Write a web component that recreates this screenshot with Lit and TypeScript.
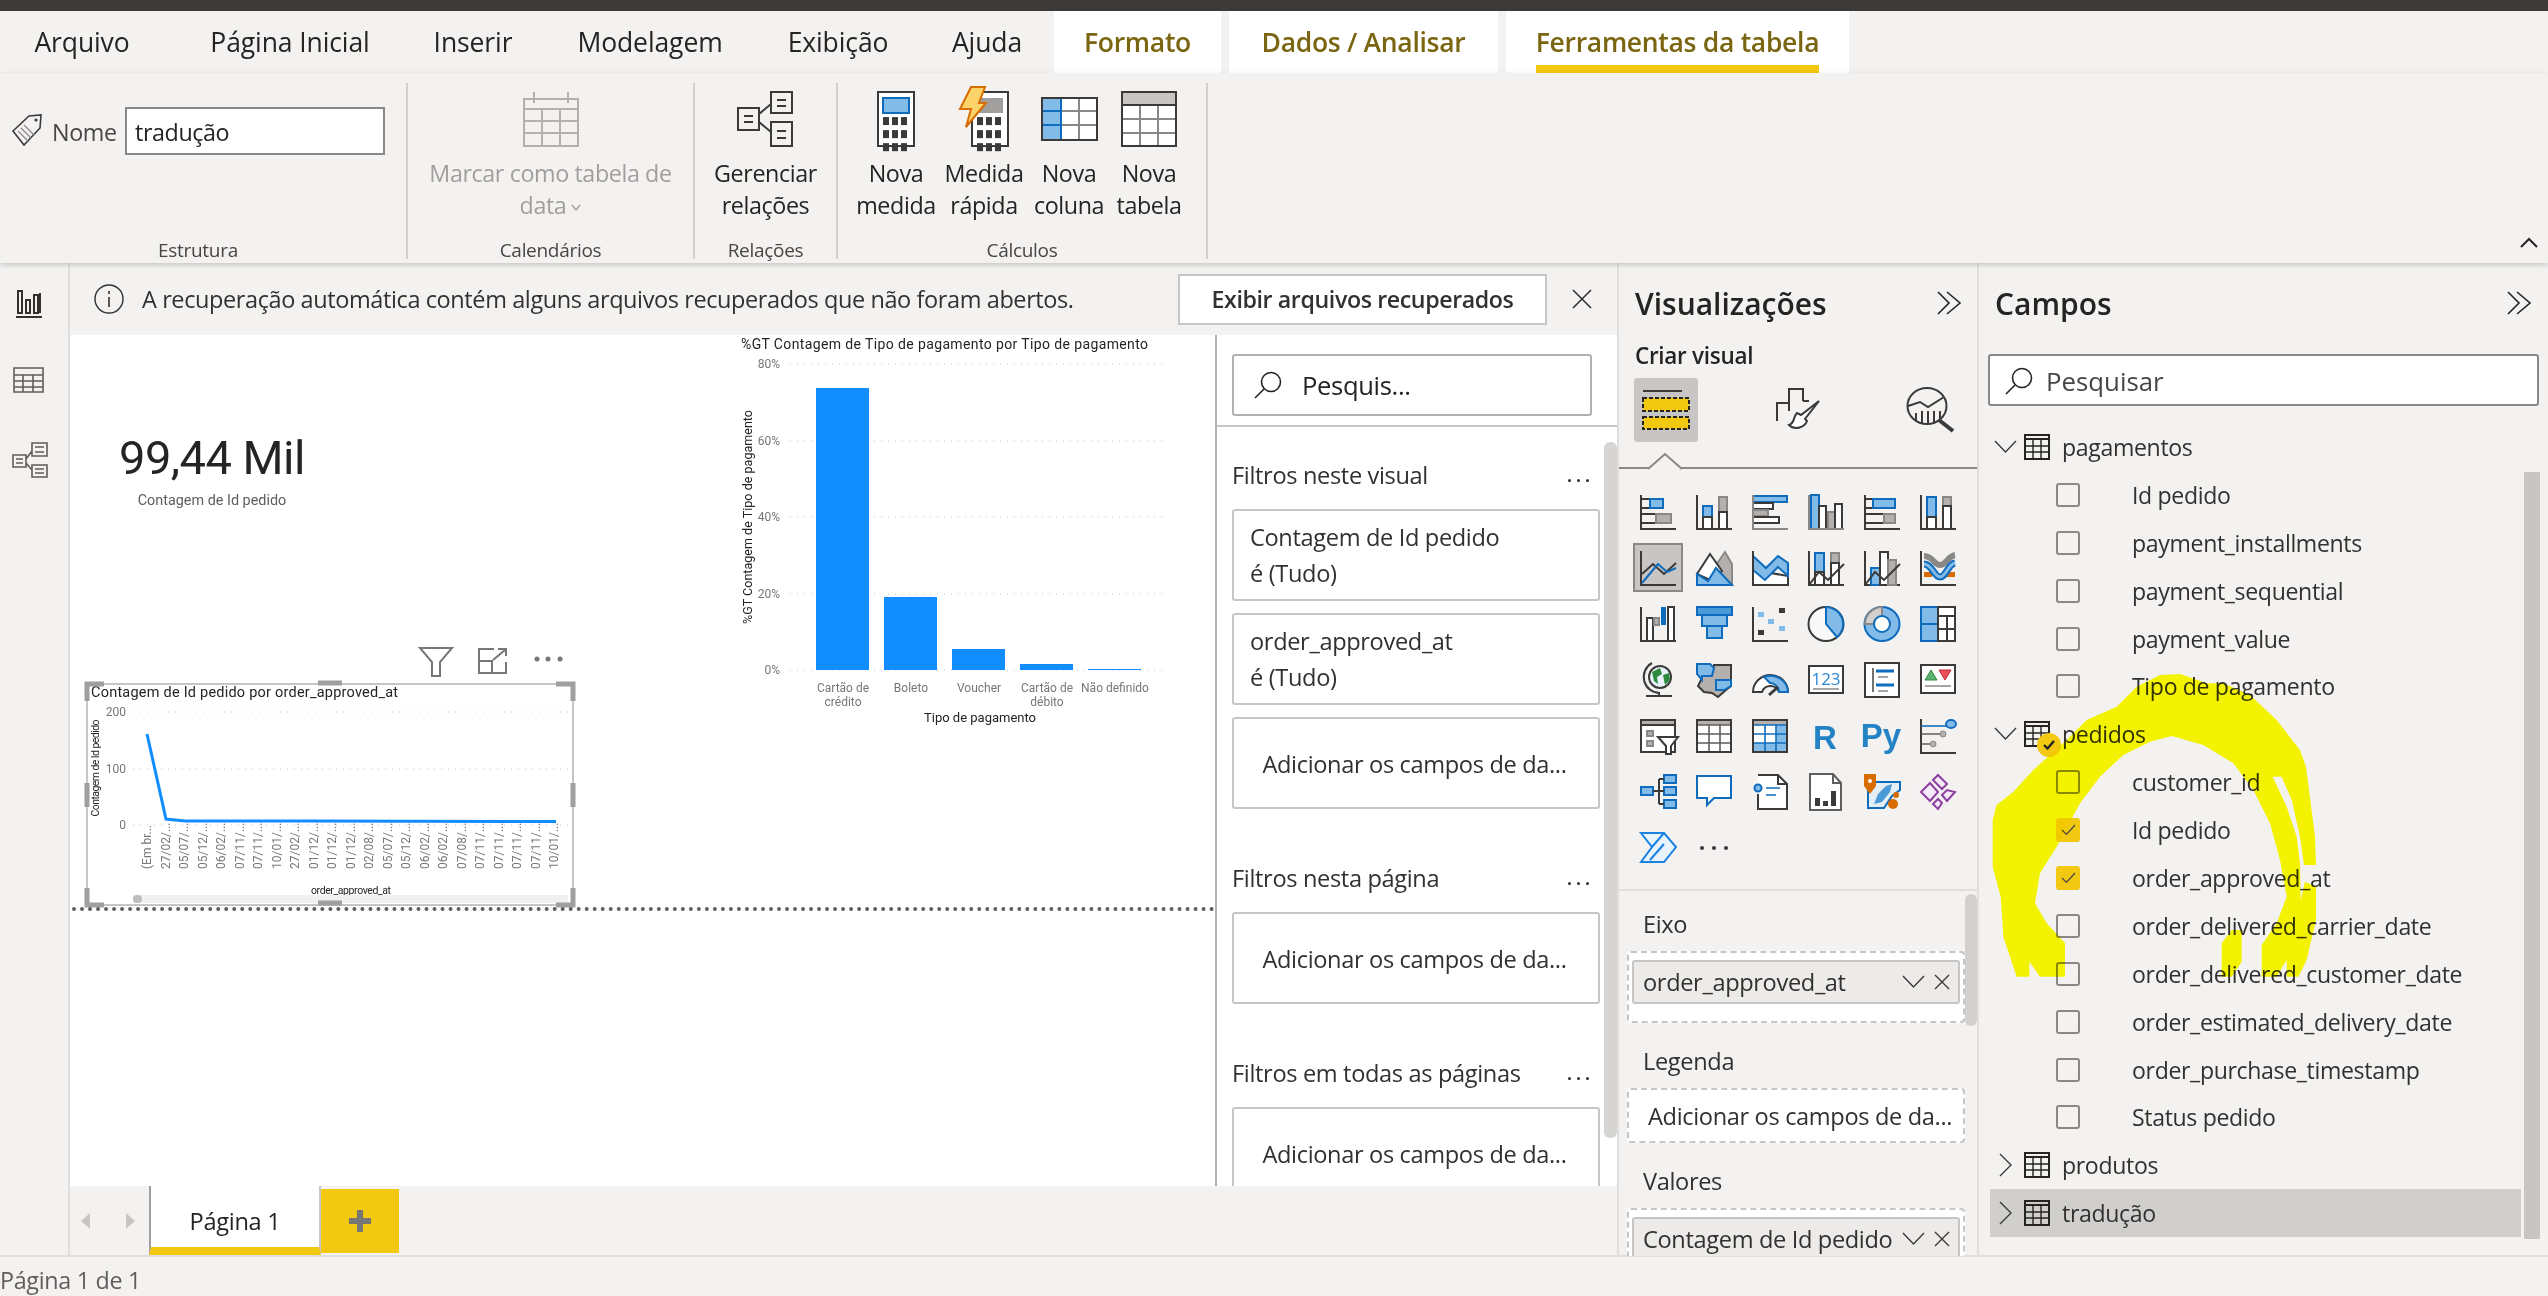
import { LitElement, html, css, svg } from "lit";
import { customElement } from "lit/decorators.js";

// shared look of the small svg icons
const iconStyles = css`
    svg { display: block; overflow: visible; }
    .d { fill: none; stroke: #3b3a39; stroke-width: 2; }
    .t { fill: none; stroke: #3b3a39; stroke-width: 1.4; }
    .w { fill: #ffffff; stroke: #3b3a39; stroke-width: 2; }
    .b { fill: #83bbe8; stroke: #0f6cbd; stroke-width: 2; }
    .g { fill: #b3b0ad; stroke: #8a8886; stroke-width: 2; }
    .f { fill: #3b3a39; stroke: none; }
`;

const axis = svg`<path class="d" d="M1 1V35H36"/>`;
const lineOver = svg`<path class="d" d="M1 35L11 22L20 30L36 14"/>`;

const vizIcons = [
    svg`${axis}<path class="d" d="M1 5H10M1 14H10M1 20H16M1 29H16"/><rect class="b" x="10" y="5" width="13" height="9"/><rect class="g" x="16" y="20" width="15" height="9"/>`,
    svg`${axis}<rect class="b" x="7" y="12" width="9" height="11"/><rect class="w" x="7" y="23" width="9" height="12"/><rect class="g" x="23" y="3" width="8" height="15"/><rect class="w" x="23" y="18" width="8" height="17"/>`,
    svg`<rect class="b" x="1" y="2" width="34" height="6"/><rect class="w" x="1" y="9" width="20" height="6"/><rect class="g" x="1" y="16" width="15" height="6"/><rect class="w" x="1" y="23" width="26" height="6"/><path class="g" d="M1 1V35H36" style="fill:none"/>`,
    svg`<rect class="b" x="3" y="1" width="8" height="34"/><rect class="w" x="11" y="12" width="7" height="23"/><rect class="g" x="20" y="18" width="7" height="17"/><rect class="w" x="27" y="10" width="7" height="25"/><path class="g" d="M1 1V35H36" style="fill:none"/>`,
    svg`${axis}<path class="d" d="M1 5H9M1 14H9M1 20H20M1 29H20"/><rect class="b" x="9" y="5" width="22" height="9"/><rect class="g" x="20" y="20" width="11" height="9"/>`,
    svg`${axis}<rect class="b" x="7" y="3" width="9" height="20"/><rect class="w" x="7" y="23" width="9" height="12"/><rect class="g" x="23" y="3" width="8" height="9"/><rect class="w" x="23" y="12" width="8" height="23"/>`,
    svg`<rect x="-6" y="-6" width="48" height="47" fill="#c8c6c4" stroke="#8a8886" stroke-width="2"/>${axis}<path class="d" d="M2 24L13 14L24 24L36 13"/><path d="M2 33L18 14L27 22L36 18" fill="none" stroke="#0f6cbd" stroke-width="2"/>`,
    svg`<path class="g" d="M18 18L29 2L36 14V35H26Z"/><path class="w" d="M1 24L14 4L26 21L14 30Z"/><path class="b" d="M1 35V24L12 31L20 18L36 35Z"/>`,
    svg`<path class="w" d="M1 20V35H36V26Z"/><path class="b" d="M1 6L14 18L26 6L36 13V26L26 17L13 30L1 20Z"/><path class="d" d="M1 1V35H36"/>`,
    svg`${axis}<rect class="b" x="7" y="3" width="9" height="19"/><rect class="w" x="7" y="22" width="9" height="13"/><rect class="g" x="23" y="3" width="8" height="10"/><rect class="w" x="23" y="13" width="8" height="22"/>${lineOver}`,
    svg`${axis}<rect class="b" x="7" y="18" width="9" height="17"/><rect class="w" x="16" y="2" width="8" height="33"/><rect class="g" x="24" y="10" width="8" height="25"/>${lineOver}`,
    svg`${axis}<path d="M4 6C13 6 14 15 20 15S28 6 35 5" fill="none" stroke="#8a8886" stroke-width="6"/><rect x="4" y="22" width="8" height="5" fill="#d86c00"/><rect x="27" y="22" width="8" height="5" fill="#d86c00"/><path d="M4 14C12 14 14 27 20 27S28 14 35 13" fill="none" stroke="#0f6cbd" stroke-width="7"/><path d="M4 14C12 14 14 27 20 27S28 14 35 13" fill="none" stroke="#83bbe8" stroke-width="3"/>`,
    svg`${axis}<rect class="w" x="7" y="12" width="6" height="23"/><rect class="g" x="14" y="12" width="5" height="7"/><rect x="21" y="1" width="5" height="18" fill="#0f6cbd"/><rect class="w" x="28" y="1" width="6" height="34"/>`,
    svg`<rect x="1" y="1" width="35" height="8" fill="#4a9ad8" stroke="#0f6cbd" stroke-width="2"/><rect class="b" x="6" y="9" width="25" height="11"/><rect class="b" x="11" y="20" width="15" height="12"/>`,
    svg`${axis}<rect x="6" y="6" width="6" height="5" fill="#83bbe8"/><rect x="16" y="13" width="6" height="5" fill="#83bbe8"/><rect x="27" y="20" width="6" height="5" fill="#83bbe8"/><rect class="f" x="27" y="2" width="6" height="5"/><rect class="f" x="6" y="24" width="6" height="5"/>`,
    svg`<ellipse class="w" cx="18" cy="18" rx="17.5" ry="17" style="fill:#f8f8f8"/><path class="b" d="M18 1A17.5 17 0 0 1 29 31L18 18Z"/>`,
    svg`<ellipse class="b" cx="18" cy="18" rx="17.5" ry="17"/><path class="g" d="M18 1A17.5 17 0 0 0 1 18H10A8 8 0 0 1 18 10Z" style="fill:#d2d0ce"/><ellipse cx="18" cy="18" rx="8" ry="8" fill="#fff" stroke="#0f6cbd" stroke-width="2"/>`,
    svg`<rect class="b" x="1" y="1" width="17" height="17"/><rect class="b" x="1" y="18" width="17" height="17"/><rect class="w" x="18" y="1" width="17" height="34"/><path class="d" d="M18 10H35M27 10V35M18 23H35"/>`,
    svg`<circle cx="20" cy="15" r="11" fill="#e8f2fb" stroke="#3b3a39" stroke-width="2"/><path d="M12 10L20 6L22 12L17 15L18 22L14 19Z" fill="#2e8b3e"/><path d="M23 13L29 11L30 18L25 23Z" fill="#2e8b3e"/><path class="d" d="M12 1A16 16 0 0 0 20 31M6 34H32M19 31V34"/>`,
    svg`<path class="g" d="M5 18L2 24L8 30L16 31L22 35L30 28L35 24V3L18 3L16 10L6 12Z" style="stroke:#3b3a39"/><path class="b" d="M1 2H14L18 6L16 14L6 14L6 18L1 12Z"/><path class="b" d="M20 18H35V24L28 28H20Z"/>`,
    svg`<path class="w" d="M1 30A17.5 17 0 0 1 36 30H27A9 9 0 0 0 10 30Z"/><path class="b" d="M12 15A17.5 17 0 0 1 36 30H27A9 9 0 0 0 18 21Z"/><path class="d" d="M17 33L26 25" style="stroke-width:3"/>`,
    svg`<rect class="w" x="1" y="4" width="34" height="27"/><text x="18" y="23" text-anchor="middle" font-family="Open Sans, sans-serif" font-size="17" fill="#2b88d8">123</text><path d="M5 27H31" stroke="#8a8886" stroke-width="1.5"/>`,
    svg`<rect class="w" x="1" y="1" width="34" height="34"/><path class="t" d="M9 6V30"/><path d="M12 9H30M12 23H30" stroke="#0f6cbd" stroke-width="3"/><path d="M14 15H24M14 29H24" stroke="#8a8886" stroke-width="1.5"/>`,
    svg`<rect class="w" x="1" y="3" width="34" height="28"/><path d="M5 18L11 8L17 18Z" fill="#5fb370" stroke="#2e8b3e"/><path d="M19 8H31L25 18Z" fill="#e8505b" stroke="#c4262e"/><path d="M5 24H31" stroke="#8a8886" stroke-width="1.5"/>`,
    svg`<rect class="w" x="1" y="2" width="34" height="32"/><rect x="1" y="2" width="34" height="5" fill="#b3b0ad" stroke="#3b3a39" stroke-width="2"/><rect class="g" x="7" y="13" width="6" height="5"/><rect class="g" x="7" y="23" width="6" height="5"/><path d="M18 19H38L31 28V36H26V28Z" fill="#fff" stroke="#3b3a39" stroke-width="2"/>`,
    svg`<rect class="w" x="1" y="2" width="34" height="32"/><rect x="1" y="2" width="34" height="5" fill="#b3b0ad"/><path d="M1 7H35M1 16H35M1 25H35M13 7V34M24 7V34" fill="none" stroke="#605e5c" stroke-width="1.6"/><rect x="1" y="2" width="34" height="32" fill="none" stroke="#3b3a39" stroke-width="2"/>`,
    svg`<rect class="w" x="1" y="2" width="34" height="32"/><rect x="1" y="2" width="34" height="5" fill="#b3b0ad"/><rect x="24" y="7" width="11" height="27" fill="#83bbe8"/><rect x="1" y="25" width="34" height="9" fill="#83bbe8"/><path d="M1 7H35M1 16H35M1 25H35M13 7V34M24 7V34" fill="none" stroke="#0f6cbd" stroke-width="1.6"/><rect x="1" y="2" width="34" height="32" fill="none" stroke="#3b3a39" stroke-width="2"/>`,
    svg`<text x="17" y="31" text-anchor="middle" font-family="Liberation Sans, sans-serif" font-weight="700" font-size="33" fill="#2483c5">R</text>`,
    svg`<text x="17" y="29" text-anchor="middle" font-family="Liberation Sans, sans-serif" font-weight="700" font-size="33" fill="#2483c5">Py</text>`,
    svg`${axis}<path d="M1 8H27" stroke="#0f6cbd" stroke-width="1.6"/><ellipse cx="31" cy="6" rx="5" ry="4" fill="#83bbe8" stroke="#0f6cbd" stroke-width="2"/><path d="M1 16H20M1 26H10" stroke="#605e5c" stroke-width="1.6"/><circle cx="23" cy="16" r="3" fill="#b3b0ad" stroke="#8a8886"/><circle cx="13" cy="26" r="3" fill="#b3b0ad" stroke="#8a8886"/>`,
    svg`<rect class="b" x="1" y="13" width="12" height="8"/><rect class="b" x="24" y="1" width="12" height="8"/><rect class="b" x="24" y="13" width="12" height="8"/><rect class="b" x="24" y="26" width="12" height="8"/><path class="d" d="M13 17H24M19 5V30M19 5H24M19 30H24"/>`,
    svg`<path d="M1 2H35V24H18L11 31V24H1Z" fill="#ffffff" stroke="#0f6cbd" stroke-width="2"/>`,
    svg`<path class="w" d="M6 1H26L35 10V35H6V20"/><path class="d" d="M26 1V10H35"/><circle cx="6" cy="14" r="3.5" fill="#83bbe8" stroke="#0f6cbd" stroke-width="2"/><path d="M14 14H28M14 21H24" stroke="#0f6cbd" stroke-width="1.6"/>`,
    svg`<path class="w" d="M2 0H25L33 9V36H2Z" style="stroke:#605e5c"/><path class="d" d="M25 0V9H33" style="stroke:#605e5c"/><rect class="f" x="7" y="24" width="5" height="8"/><rect class="f" x="15" y="27" width="5" height="5"/><rect class="f" x="23" y="17" width="5" height="15"/>`,
    svg`<path d="M4 8H36V16L28 22L20 34H4Z" fill="#e4eef7" stroke="#0f6cbd" stroke-width="2"/><path d="M14 20L22 12L28 10L26 18L18 28L10 30Z" fill="#4a9ad8"/><path d="M0 0H12V12L6 20L0 12Z" fill="#d86c00"/><circle cx="6" cy="7" r="2" fill="#fff"/><circle cx="32" cy="21" r="3" fill="#d86c00"/><circle cx="29" cy="30" r="5" fill="#d86c00"/>`,
    svg`<path d="M1 18L10 9L18 18L10 27ZM13 6L18 1L27 10L22 15ZM22 21L27 16L35 18L27 27ZM13 30L18 25L22 29L18 35Z" fill="#f4e9f6" stroke="#8e3ea0" stroke-width="2"/>`,
    svg`<path d="M1 3H24L36 17L24 32H1L12 17Z" fill="#e8f3fc" stroke="#1a82e2" stroke-width="2"/><path d="M12 17L24 3M10 30L24 14" stroke="#1a82e2" stroke-width="2"/>`,
    svg`<circle class="f" cx="6" cy="18" r="2"/><circle class="f" cx="18" cy="18" r="2"/><circle class="f" cx="30" cy="18" r="2"/>`,
];

const chevronDown = svg`<svg width="23" height="14" viewBox="0 0 23 14"><path d="M1 1L11.5 12L22 1" fill="none" stroke="#3b3a39" stroke-width="1.4"/></svg>`;
const crossIcon = svg`<svg width="16" height="16" viewBox="0 0 16 16"><path d="M1 1L15 15M15 1L1 15" fill="none" stroke="#3b3a39" stroke-width="1.4"/></svg>`;
const searchIcon = svg`<svg width="28" height="28" viewBox="0 0 28 28"><circle cx="17" cy="11" r="9.5" fill="none" stroke="#252423" stroke-width="1.6"/><path d="M10 18L1 27" fill="none" stroke="#252423" stroke-width="1.6"/></svg>`;
const doubleChevron = svg`<svg width="24" height="24" viewBox="0 0 24 24"><path d="M1 1L12 12L1 23M10 1L23 12L10 23" fill="none" stroke="#252423" stroke-width="1.6"/></svg>`;

@customElement("ribbon-bar")
export class RibbonBar extends LitElement {
    static styles = [iconStyles, css`
        :host { display: block; position: relative; z-index: 3; font-family: "Open Sans", "Noto Sans", sans-serif; color: #252423; }
        .tabs { display: flex; height: 62px; font-size: 26.5px; letter-spacing: -0.1px; }
        .tab { display: flex; align-items: center; justify-content: center; height: 62px; white-space: nowrap; }
        .ajuda { padding-left: 14px; box-sizing: border-box; }
        .context { background: #fff; color: #7a6510; margin-right: 8px; font-weight: 600; font-size: 26.5px; letter-spacing: -0.3px; position: relative; }
        .underline { position: absolute; left: 30px; right: 30px; bottom: 0; height: 8px; background: #f2c811; }
        .body { display: flex; height: 190px; box-sizing: border-box; padding: 10px 0 4px; background: #f3f2f1; box-shadow: 0 2px 5px rgba(0, 0, 0, 0.18); position: relative; font-size: 23.3px; letter-spacing: -0.4px; }
        .group { display: flex; flex-direction: column; border-right: 2px solid #d2d0ce; box-sizing: border-box; }
        .content { flex: 1; display: flex; min-height: 0; }
        .label { height: 18px; line-height: 18px; font-size: 19px; text-align: center; color: #484644; letter-spacing: -0.3px; white-space: nowrap; }
        .g1 .label { padding-right: 10px; }
        .name-row { align-items: flex-start; padding: 24px 0 0 12px; }
        .name-row svg { margin-top: 7px; }
        .name-label { width: 73px; margin: 8px 0 0 10px; line-height: 34px; color: #484644; }
        .name-input { width: 260px; height: 48px; box-sizing: border-box; border: 2px solid #8a8886; background: #fff; padding-left: 8px; line-height: 46px; }
        .button { display: flex; flex-direction: column; align-items: center; padding-top: 8px; text-align: center; white-space: nowrap; flex-shrink: 0; }
        .button .icon { height: 56px; display: flex; align-items: center; margin-bottom: 10px; }
        .button .line { line-height: 32px; }
        .disabled { color: #a19f9d; }
        .caret { display: inline-block; margin-left: 5px; vertical-align: 3px; }
        .collapse { position: absolute; right: 10px; top: 165px; }
        .g2 { width: 287px; }
        .g3 { width: 143px; }
        .g4 { width: 370px; }
        .g1 { width: 408px; }
        .calc { padding-left: 18px; }
    `];

    render() {
        const tabs: [string, number][] = [["Arquivo", 164], ["Página Inicial", 252], ["Inserir", 114], ["Modelagem", 240], ["Exibição", 136]];
        const context: [string, number][] = [["Formato", 167], ["Dados / Analisar", 269], ["Ferramentas da tabela", 343]];
        return html`
            <div class="tabs">
                ${tabs.map(([t, w]) => html`<div class="tab" style="width:${w}px">${t}</div>`)}
                <div class="tab ajuda" style="width:148px">Ajuda</div>
                ${context.map(([t, w], i) => html`<div class="tab context" style="width:${w}px">${t}${i === 2 ? html`<div class="underline"></div>` : ""}</div>`)}
            </div>
            <div class="body">
                <div class="group g1">
                    <div class="content name-row">
                        <svg width="30" height="32" viewBox="0 0 30 32"><path d="M1 17L17 2L29 1L28 14L12 31Z" fill="none" stroke="#3b3a39" stroke-width="1.6"/><path d="M6 17L17 28M9 14L19 24M12 11L22 21" stroke="#8a8886" stroke-width="1.2"/><circle cx="24" cy="6" r="1.6" fill="#3b3a39"/></svg>
                        <div class="name-label">Nome</div>
                        <div class="name-input">tradução</div>
                    </div>
                    <div class="label">Estrutura</div>
                </div>
                <div class="group g2">
                    <div class="content" style="justify-content:center">
                        <div class="button disabled">
                            <div class="icon">
                                <svg width="56" height="56" viewBox="0 0 56 56"><path d="M1 8H55V55H1ZM1 18H55M1 30H55M1 42H55M19 18V55M37 18V55M11 1V12M45 1V12" fill="none" stroke="#b3b0ad" stroke-width="2"/></svg>
                            </div>
                            <div class="line">Marcar como tabela de</div>
                            <div class="line">data<svg class="caret" width="10" height="7" viewBox="0 0 10 7"><path d="M1 1L5 6L9 1" fill="none" stroke="#a19f9d" stroke-width="1.4"/></svg></div>
                        </div>
                    </div>
                    <div class="label">Calendários</div>
                </div>
                <div class="group g3">
                    <div class="content" style="justify-content:center">
                        <div class="button">
                            <div class="icon">
                                <svg width="56" height="56" viewBox="0 0 56 56"><path d="M34 1H55V22H34ZM34 31H55V55H34ZM1 17H22V39H1ZM40 9H49M40 15H49M40 40H49M40 47H49M7 25H16M7 31H16M22 23L34 13M22 31L34 41" fill="none" stroke="#3b3a39" stroke-width="2"/></svg>
                            </div>
                            <div class="line">Gerenciar</div>
                            <div class="line">relações</div>
                        </div>
                    </div>
                    <div class="label">Relações</div>
                </div>
                <div class="group g4">
                    <div class="content calc">
                        <div class="button" style="width:80px">
                            <div class="icon">${this.calculator(false)}</div>
                            <div class="line">Nova</div><div class="line">medida</div>
                        </div>
                        <div class="button" style="width:96px">
                            <div class="icon">${this.calculator(true)}</div>
                            <div class="line">Medida</div><div class="line">rápida</div>
                        </div>
                        <div class="button" style="width:74px">
                            <div class="icon">
                                <svg width="57" height="44" viewBox="0 0 57 44"><rect x="1" y="1" width="55" height="42" fill="#fff"/><rect x="1" y="1" width="19" height="42" fill="#83bbe8"/><path d="M20 14H56M20 28H56M38 1V43" stroke="#8a8886" stroke-width="2"/><path d="M1 14H20M1 28H20M20 1V43" stroke="#0f6cbd" stroke-width="2"/><rect x="1" y="1" width="55" height="42" fill="none" stroke="#3b3a39" stroke-width="2"/></svg>
                            </div>
                            <div class="line">Nova</div><div class="line">coluna</div>
                        </div>
                        <div class="button" style="width:86px">
                            <div class="icon">
                                <svg width="56" height="56" viewBox="0 0 56 56"><rect x="1" y="1" width="54" height="54" fill="#fff"/><rect x="1" y="1" width="54" height="13" fill="#c8c6c4"/><path d="M1 28H55M1 42H55M19 14V55M37 14V55" stroke="#8a8886" stroke-width="2"/><rect x="1" y="1" width="54" height="54" fill="none" stroke="#3b3a39" stroke-width="2"/><path d="M1 14H55" stroke="#3b3a39" stroke-width="2"/></svg>
                            </div>
                            <div class="line">Nova</div><div class="line">tabela</div>
                        </div>
                    </div>
                    <div class="label">Cálculos</div>
                </div>
                <svg class="collapse" width="18" height="10" viewBox="0 0 18 10"><path d="M1 9L9 1L17 9" fill="none" stroke="#252423" stroke-width="2"/></svg>
            </div>
        `;
    }

    calculator(quick: boolean) {
        const keys = [16, 24, 32].flatMap((y) => [6, 15, 24].map((x) => svg`<rect class="f" x="${x}" y="${y * 1.63}" width="6" height="8"/>`));
        if (!quick) {
            return html`<svg width="38" height="56" viewBox="0 0 38 56"><rect class="w" x="1" y="1" width="36" height="54"/><rect x="6" y="7" width="26" height="15" fill="#83bbe8" stroke="#0f6cbd" stroke-width="2"/>${keys}</svg>`;
        }
        return html`<svg width="50" height="60" viewBox="0 0 50 60" style="margin-top:-4px"><rect class="w" x="13" y="5" width="36" height="54"/><rect x="18" y="11" width="26" height="15" fill="#a19f9d"/><g transform="translate(12 4)">${keys}</g><path d="M12 0H26L20 16H27L7 40L12 22H1Z" fill="#fcd26b" stroke="#d86c00" stroke-width="2"/></svg>`;
    }
}

@customElement("report-canvas")
export class ReportCanvas extends LitElement {
    static styles = css`
        :host { display: block; position: relative; width: 1145px; height: 851px; background: #fff; overflow: hidden; flex-shrink: 0; }
        .visual { position: absolute; overflow: visible; font-family: Roboto, "Liberation Sans", sans-serif; }
        .bars { left: 650px; top: 0; }
        .lines { left: 2px; top: 290px; }
        .kpi { position: absolute; left: 47px; top: 92px; width: 190px; text-align: center; font-family: Roboto, sans-serif; color: #252423; }
        .kpi-value { font-size: 47px; line-height: 62px; white-space: nowrap; letter-spacing: -0.5px; }
        .kpi-label { font-size: 14.4px; line-height: 18px; color: #605e5c; white-space: nowrap; margin-top: 3px; }
        .page-edge { position: absolute; left: 2px; right: 0; top: 572px; border-top: 4px dotted #605e5c; }
    `;

    render() {
        const bars = [[816, 388], [884, 597], [952, 649], [1020, 664], [1088, 669]];
        const ticks: [string, number][] = [["80%", 364], ["60%", 441], ["40%", 517], ["20%", 594], ["0%", 670]];
        const categories: [string[], number][] = [[["Cartão de", "crédito"], 843], [["Boleto"], 911], [["Voucher"], 979], [["Cartão de", "débito"], 1047], [["Não definido"], 1115]];
        const dates = ["(Em br...", "27/02/...", "05/07/...", "05/12/...", "06/02/...", "07/11/...", "07/11/...", "10/01/...", "27/02/...", "01/12/...", "01/12/...", "01/12/...", "02/08/...", "05/07/...", "05/12/...", "06/02/...", "06/02/...", "07/08/...", "07/11/...", "07/11/...", "07/11/...", "07/11/...", "10/01/..."];
        const lineTicks: [string, number][] = [["200", 712], ["100", 769], ["0", 825]];
        return html`
            <div class="kpi">
                <div class="kpi-value">99,44 Mil</div>
                <div class="kpi-label">Contagem de Id pedido</div>
            </div>

            <svg class="visual bars" width="530" height="400" viewBox="720 335 530 400">
                <text x="741" y="349" font-size="14" fill="#252423" textLength="407">%GT Contagem de Tipo de pagamento por Tipo de pagamento</text>
                ${ticks.map(([label, y]) => svg`
                    <path d="M790 ${y}H1166" stroke="#c8c6c4" stroke-width="1" stroke-dasharray="1 6"/>
                    <text x="780" y="${y + 4}" text-anchor="end" font-size="12" fill="#777">${label}</text>`)}
                ${bars.map(([x, top]) => svg`<rect x="${x}" y="${top}" width="53" height="${670 - top}" fill="#118dff"/>`)}
                ${categories.map(([lines, x]) => lines.map((line, i) => svg`<text x="${x}" y="${692 + i * 14}" text-anchor="middle" font-size="12" fill="#777">${line}</text>`))}
                <text x="980" y="722" text-anchor="middle" font-size="13" fill="#252423">Tipo de pagamento</text>
                <text transform="translate(752 517) rotate(-90)" text-anchor="middle" font-size="12.5" fill="#252423" textLength="214">%GT Contagem de Tipo de pagamento</text>
            </svg>

            <svg class="visual lines" width="510" height="290" viewBox="72 625 510 290">
                <path d="M420 648H452L440 662V676H432V662Z" fill="none" stroke="#797775" stroke-width="2"/>
                <path d="M494 649H479V673H506V662M479 661H492V673M493 660L505 650M498 649H506V656" fill="none" stroke="#797775" stroke-width="2"/>
                <circle cx="537" cy="659" r="2.5" fill="#797775"/><circle cx="548" cy="659" r="2.5" fill="#797775"/><circle cx="560" cy="659" r="2.5" fill="#797775"/>

                <rect x="87" y="684" width="486" height="221" fill="#fff" stroke="#c8c6c4" stroke-width="2"/>
                <text x="91" y="697" font-size="14.5" fill="#252423" textLength="307">Contagem de Id pedido por order_approved_at</text>
                ${lineTicks.map(([label, y]) => svg`
                    <path d="M133 ${y}H568" stroke="#c8c6c4" stroke-width="1" stroke-dasharray="1 6"/>
                    <text x="126" y="${y + 4}" text-anchor="end" font-size="12" fill="#777">${label}</text>`)}
                <text transform="translate(99 768) rotate(-90)" text-anchor="middle" font-size="10.5" fill="#252423" textLength="97">Contagem de Id pedido</text>
                <path d="M147 734L166 819L185 821L310 821L556 821.5" fill="none" stroke="#118dff" stroke-width="3"/>
                ${dates.map((d, i) => svg`<text transform="translate(${151 + i * 18.5} 869) rotate(-90)" font-size="12" fill="#777">${d}</text>`)}
                <text x="351" y="894" text-anchor="middle" font-size="10.5" fill="#252423" textLength="80">order_approved_at</text>
                <rect x="133" y="895" width="435" height="8" fill="#f0f0f0"/>
                <rect x="133" y="895" width="9" height="8" rx="4" fill="#bdbdbd"/>
                <path d="M87 701V684H104M556 684H573V701M87 888V905H104M556 905H573V888" fill="none" stroke="#a19f9d" stroke-width="5"/>
                <path d="M318 683H342M318 903H342M87 783V807M573 783V807" fill="none" stroke="#a19f9d" stroke-width="5"/>
            </svg>

            <div class="page-edge"></div>
        `;
    }
}

@customElement("filter-pane")
export class FilterPane extends LitElement {
    static styles = css`
        :host { display: block; position: relative; width: 402px; height: 851px; box-sizing: border-box; background: #fff; border-left: 2px solid #b3b0ad; overflow: hidden; font-family: "Open Sans", "Noto Sans", sans-serif; font-size: 23.6px; letter-spacing: -0.35px; color: #323130; flex-shrink: 0; }
        .search { display: flex; align-items: center; gap: 20px; margin: 19px 0 0 15px; width: 360px; height: 62px; box-sizing: border-box; border: 2px solid #b3b0ad; border-radius: 3px; padding-left: 20px; color: #252423; font-size: 25.6px; }
        .rule { height: 2px; background: #c8c6c4; margin-top: 9px; }
        .section-title { display: flex; align-items: center; justify-content: space-between; height: 30px; margin: 0 0 19px 15px; width: 360px; white-space: nowrap; }
        .dots { display: flex; gap: 6px; margin: 10px 3px 0 0; }
        .dots i { width: 3px; height: 3px; background: #323130; border-radius: 50%; }
        .card { width: 368px; height: 92px; box-sizing: border-box; margin: 0 0 12px 15px; border: 2px solid #c8c6c4; border-radius: 3px; padding: 8px 0 0 16px; line-height: 36px; white-space: nowrap; }
        .add { display: flex; align-items: center; justify-content: center; padding: 2px 3px 0 0; }
        .first { margin-top: 33px; }
        .next { margin-top: 54px; }
        .scroll { position: absolute; left: 387px; top: 107px; width: 13px; height: 696px; border-radius: 6px; background: #d6d5d3; }
    `;

    render() {
        const dots = html`<span class="dots"><i></i><i></i><i></i></span>`;
        return html`
            <div class="search">${searchIcon}<span>Pesquis...</span></div>
            <div class="rule"></div>
            <div class="section-title first"><span>Filtros neste visual</span>${dots}</div>
            <div class="card">Contagem de Id pedido<br />é (Tudo)</div>
            <div class="card">order_approved_at<br />é (Tudo)</div>
            <div class="card add">Adicionar os campos de da...</div>
            <div class="section-title next"><span>Filtros nesta página</span>${dots}</div>
            <div class="card add">Adicionar os campos de da...</div>
            <div class="section-title next"><span>Filtros em todas as páginas</span>${dots}</div>
            <div class="card add">Adicionar os campos de da...</div>
            <div class="scroll"></div>
        `;
    }
}

@customElement("viz-pane")
export class VizPane extends LitElement {
    static styles = [iconStyles, css`
        :host { display: block; position: relative; width: 362px; height: 993px; box-sizing: border-box; border-left: 2px solid #e1dfdd; border-right: 2px solid #e1dfdd; overflow: hidden; font-family: "Open Sans", "Noto Sans", sans-serif; color: #252423; flex-shrink: 0; }
        .title { display: flex; align-items: center; justify-content: space-between; height: 40px; margin-top: 20px; padding: 0 16px; font-size: 30px; font-weight: 600; }
        .subtitle { height: 30px; line-height: 30px; margin: 18px 0 7px 16px; font-size: 22.5px; font-weight: 600; letter-spacing: -0.3px; }
        .modes { display: flex; gap: 68px; padding-left: 15px; }
        .mode { width: 64px; height: 64px; display: flex; align-items: center; justify-content: center; border-radius: 3px; }
        .mode.on { background: #c8c6c4; }
        .rule { position: relative; height: 2px; background: #8a8886; margin-top: 25px; }
        .notch { position: absolute; left: 29px; top: -14px; }
        .grid { display: grid; grid-template-columns: repeat(6, 36px); grid-auto-rows: 36px; gap: 20px; padding: 25px 0 0 21px; height: 420px; box-sizing: border-box; }
        .wells { border-top: 2px solid #e1dfdd; padding-top: 18px; font-size: 23.6px; letter-spacing: -0.35px; color: #323130; }
        .well-title { height: 30px; line-height: 30px; margin: 0 0 12px 24px; }
        .well { width: 338px; box-sizing: border-box; margin: 0 0 23px 8px; background: #fff; border: 2px dashed #c8c6c4; border-radius: 4px; padding: 7px 3px 0; height: 72px; }
        .well.empty { height: 55px; padding: 0 0 0 19px; line-height: 52px; white-space: nowrap; }
        .pill { display: flex; align-items: center; height: 44px; box-sizing: border-box; background: #edebe9; border: 2px solid #c8c6c4; border-radius: 3px; padding: 0 8px 0 9px; white-space: nowrap; }
        .pill .name { flex: 1; }
        .pill .x { margin-left: 9px; }
        .scroll { position: absolute; right: 0; top: 631px; width: 12px; height: 132px; border-radius: 6px; background: #d2d0ce; }
    `];

    render() {
        return html`
            <div class="title"><span>Visualizações</span>${doubleChevron}</div>
            <div class="subtitle">Criar visual</div>
            <div class="modes">
                <div class="mode on">
                    <svg width="48" height="40" viewBox="0 0 48 40"><path d="M1 1H40" stroke="#3b3a39" stroke-width="2"/><rect x="1" y="8" width="46" height="13" fill="#f2c811" stroke="#252423" stroke-width="2" stroke-dasharray="4 2"/><rect x="1" y="27" width="46" height="12" fill="#f2c811" stroke="#252423" stroke-width="2" stroke-dasharray="4 2"/></svg>
                </div>
                <div class="mode">
                    <svg width="46" height="46" viewBox="0 0 46 46"><path d="M2 34V16H14M14 24V2H28V14M28 14H34M14 16V24" fill="none" stroke="#3b3a39" stroke-width="2"/><path d="M44 14L26 28L22 26C18 30 20 36 14 38C20 44 30 40 32 34L30 32Z" fill="#fff" stroke="#3b3a39" stroke-width="2"/></svg>
                </div>
                <div class="mode">
                    <svg width="48" height="46" viewBox="0 0 48 46"><ellipse cx="21" cy="19" rx="19.5" ry="18" fill="none" stroke="#3b3a39" stroke-width="2"/><path d="M2 19L14 15L22 20L38 10M10 26V33M16 24V36M22 24V36M28 24V36M34 24V33" fill="none" stroke="#3b3a39" stroke-width="2"/><path d="M33 33L47 44" stroke="#3b3a39" stroke-width="4"/></svg>
                </div>
            </div>
            <div class="rule">
                <svg class="notch" width="34" height="16" viewBox="0 0 34 16"><path d="M0 16L17 1L34 16" fill="#f3f2f1" stroke="#8a8886" stroke-width="2"/></svg>
            </div>
            <div class="grid">
                ${vizIcons.map((icon) => html`<svg width="36" height="36" viewBox="0 0 36 36">${icon}</svg>`)}
            </div>
            <div class="wells">
                <div class="well-title">Eixo</div>
                <div class="well">
                    <div class="pill"><span class="name">order_approved_at</span>${chevronDown}<span class="x">${crossIcon}</span></div>
                </div>
                <div class="well-title">Legenda</div>
                <div class="well empty">Adicionar os campos de da...</div>
                <div class="well-title">Valores</div>
                <div class="well">
                    <div class="pill"><span class="name">Contagem de Id pedido</span>${chevronDown}<span class="x">${crossIcon}</span></div>
                </div>
            </div>
            <div class="scroll"></div>
        `;
    }
}

type FieldGroup = { name: string; open: boolean; active?: boolean; badge?: boolean; fields: [string, boolean][] };

const fieldGroups: FieldGroup[] = [
    {
        name: "pagamentos", open: true,
        fields: [["Id pedido", false], ["payment_installments", false], ["payment_sequential", false], ["payment_value", false], ["Tipo de pagamento", false]],
    },
    {
        name: "pedidos", open: true, badge: true,
        fields: [["customer_id", false], ["Id pedido", true], ["order_approved_at", true], ["order_delivered_carrier_date", false], ["order_delivered_customer_date", false], ["order_estimated_delivery_date", false], ["order_purchase_timestamp", false], ["Status pedido", false]],
    },
    { name: "produtos", open: false, fields: [] },
    { name: "tradução", open: false, active: true, fields: [] },
];

@customElement("fields-pane")
export class FieldsPane extends LitElement {
    static styles = css`
        :host { display: block; position: relative; flex: 1; height: 993px; font-family: "Open Sans", "Noto Sans", sans-serif; color: #323130; }
        svg { display: block; flex-shrink: 0; }
        .title { display: flex; align-items: center; justify-content: space-between; height: 40px; margin-top: 20px; padding: 0 17px 0 16px; font-size: 30px; font-weight: 600; color: #252423; }
        .search { display: flex; align-items: center; gap: 13px; width: 551px; height: 52px; box-sizing: border-box; margin: 31px 0 0 9px; padding: 2px 0 0 15px; background: #fff; border: 2px solid #8a8886; border-radius: 3px; font-size: 25.8px; color: #484644; }
        .tree { margin: 17px 0 0 11px; width: 531px; font-size: 23.1px; letter-spacing: -0.35px; }
        .row { display: flex; align-items: center; height: 47.9px; white-space: nowrap; }
        .head { padding-left: 4px; }
        .head.active { background: #d0cfcd; }
        .arrow { width: 23px; display: flex; justify-content: center; }
        .table { position: relative; margin: 0 12px 0 7px; }
        .badge { position: absolute; left: 13px; top: 12px; width: 24px; height: 24px; border-radius: 50%; background: #f2c811; display: flex; align-items: center; justify-content: center; }
        .field { padding-left: 66px; }
        .check { width: 24px; height: 24px; box-sizing: border-box; border: 2px solid #8a8886; border-radius: 3px; margin-right: 52px; flex-shrink: 0; }
        .check.on { background: #f2c811; border: none; display: flex; align-items: center; justify-content: center; }
        .scroll { position: absolute; left: 545px; top: 209px; width: 16px; height: 767px; background: #c8c6c4; }
    `;

    render() {
        return html`
            <div class="title"><span>Campos</span>${doubleChevron}</div>
            <div class="search">${searchIcon}<span>Pesquisar</span></div>
            <div class="tree">${fieldGroups.map((group) => this.renderGroup(group))}</div>
            <div class="scroll"></div>
        `;
    }

    renderGroup(group: FieldGroup) {
        return html`
            <div class="row head ${group.active ? "active" : ""}">
                <div class="arrow">
                    ${group.open
                        ? html`<svg width="23" height="14" viewBox="0 0 23 14"><path d="M1 1L11.5 12L22 1" fill="none" stroke="#3b3a39" stroke-width="1.4"/></svg>`
                        : html`<svg width="13" height="24" viewBox="0 0 13 24"><path d="M1 1L12 12L1 23" fill="none" stroke="#3b3a39" stroke-width="1.4"/></svg>`}
                </div>
                <div class="table">
                    <svg width="26" height="26" viewBox="0 0 26 26"><path d="M1 1H25V25H1ZM1 5H25" fill="none" stroke="#252423" stroke-width="2"/><path d="M1 12H25M1 18H25M9 5V25M17 5V25" fill="none" stroke="#252423" stroke-width="1.4"/></svg>
                    ${group.badge
                        ? html`<div class="badge"><svg width="12" height="10" viewBox="0 0 12 10"><path d="M1 5L4.5 8.5L11 1" fill="none" stroke="#252423" stroke-width="2.4"/></svg></div>`
                        : ""}
                </div>
                <span>${group.name}</span>
            </div>
            ${group.fields.map(([name, checked]) => html`
                <div class="row field">
                    ${checked
                        ? html`<div class="check on"><svg width="15" height="12" viewBox="0 0 15 12"><path d="M1 6L5.5 10.5L14 1" fill="none" stroke="#484644" stroke-width="1.2"/></svg></div>`
                        : html`<div class="check"></div>`}
                    <span>${name}</span>
                </div>`)}
        `;
    }
}

@customElement("app-root")
export class AppRoot extends LitElement {
    static styles = [iconStyles, css`
        :host { display: flex; flex-direction: column; position: relative; width: 2548px; height: 1296px; overflow: hidden; background: #f3f2f1; font-family: "Open Sans", "Noto Sans", sans-serif; color: #252423; }
        .topbar { height: 11px; background: #3b3a39; flex-shrink: 0; }
        .main { display: flex; height: 992px; flex-shrink: 0; }
        .rail { width: 70px; box-sizing: border-box; border-right: 2px solid #e1dfdd; display: flex; flex-direction: column; gap: 48px; padding: 27px 0 0 15px; flex-shrink: 0; }
        .rail .wide { margin-left: -2px; }
        .rail .wider { margin-left: -3px; }
        .center { display: flex; flex-direction: column; width: 1547px; flex-shrink: 0; }
        .notice { display: flex; align-items: center; height: 72px; padding-left: 24px; font-size: 23.5px; letter-spacing: -0.4px; color: #323130; white-space: nowrap; flex-shrink: 0; }
        .notice-text { margin-left: 18px; }
        .notice-button { width: 369px; height: 51px; box-sizing: border-box; margin-left: auto; background: #fff; border: 2px solid #c8c6c4; display: flex; align-items: center; justify-content: center; font-weight: 600; font-size: 23.2px; letter-spacing: -0.4px; }
        .notice-close { width: 69px; display: flex; justify-content: center; padding-right: 1px; }
        .report { display: flex; height: 851px; flex-shrink: 0; }
        .pages { display: flex; height: 69px; padding-left: 11px; flex-shrink: 0; }
        .pager { display: flex; align-items: center; gap: 36px; width: 68px; padding-top: 0; }
        .page { width: 172px; box-sizing: border-box; background: #fff; border-left: 2px solid #a19f9d; border-right: 2px solid #c8c6c4; border-bottom: 8px solid #f2c811; display: flex; align-items: center; justify-content: center; font-size: 23.6px; letter-spacing: -0.3px; font-weight: 500; padding-top: 8px; }
        .add-page { width: 78px; height: 64px; margin-top: 3px; background: #f2c811; display: flex; align-items: center; justify-content: center; }
        .status { flex: 1; border-top: 2px solid #e1dfdd; font-size: 23.3px; letter-spacing: -0.3px; line-height: 46px; color: #605e5c; }
        .scribble { position: absolute; left: 1990px; top: 660px; mix-blend-mode: multiply; pointer-events: none; z-index: 5; }
    `];

    render() {
        return html`
            <div class="topbar"></div>
            <ribbon-bar></ribbon-bar>
            <div class="main">
                <div class="rail">
                    <svg width="28" height="28" viewBox="0 0 28 28"><path d="M1 27H27M3 23V1H7V23ZM11 23V10H15V23ZM19 23V5H23V23ZM25 23V3" fill="none" stroke="#323130" stroke-width="2"/></svg>
                    <svg class="wide" width="31" height="28" viewBox="0 0 31 28"><path d="M1 2H30V26H1ZM1 9H30M1 15H30M1 21H30M10 9V26M20 9V26" fill="none" stroke="#605e5c" stroke-width="1.6"/></svg>
                    <svg class="wider" width="36" height="36" viewBox="0 0 36 36"><path d="M1 13H14V25H1ZM20 1H35V14H20ZM20 23H35V35H20ZM14 17L20 9M14 21L20 28M23 5H32M23 10H32M23 27H32M23 31H32M4 17H11M4 21H11" fill="none" stroke="#605e5c" stroke-width="1.6"/></svg>
                </div>
                <div class="center">
                    <div class="notice">
                        <svg width="30" height="30" viewBox="0 0 30 30"><circle cx="15" cy="15" r="14" fill="none" stroke="#323130" stroke-width="1.4"/><path d="M15 13V23M15 7V10" stroke="#323130" stroke-width="1.6"/></svg>
                        <span class="notice-text">A recuperação automática contém alguns arquivos recuperados que não foram abertos.</span>
                        <div class="notice-button">Exibir arquivos recuperados</div>
                        <div class="notice-close"><svg width="20" height="20" viewBox="0 0 20 20"><path d="M1 1L19 19M19 1L1 19" fill="none" stroke="#323130" stroke-width="1.6"/></svg></div>
                    </div>
                    <div class="report">
                        <report-canvas></report-canvas>
                        <filter-pane></filter-pane>
                    </div>
                    <div class="pages">
                        <div class="pager">
                            <svg width="9" height="16" viewBox="0 0 9 16"><path d="M9 0V16L0 8Z" fill="#c8c6c4"/></svg>
                            <svg width="9" height="16" viewBox="0 0 9 16"><path d="M0 0V16L9 8Z" fill="#c8c6c4"/></svg>
                        </div>
                        <div class="page">Página 1</div>
                        <div class="add-page"><svg width="22" height="22" viewBox="0 0 22 22"><path d="M8 0H14V8H22V14H14V22H8V14H0V8H8Z" fill="#797775"/></svg></div>
                    </div>
                </div>
                <viz-pane></viz-pane>
                <fields-pane></fields-pane>
            </div>
            <div class="status">Página 1 de 1</div>
            <svg class="scribble" width="340" height="330" viewBox="0 0 1020 990">
                <path fill="#ffff00" d="M80 950L40 830L32 710L8 620L8 480L20 435L70 395L130 330L230 240L290 180L380 140L440 80L510 45L570 42L650 70L700 70L780 105L860 180L930 270L948 320L975 530L978 615L942 615L930 530L905 420L875 350L848 350L890 440L920 530L930 610L932 720L945 665L978 680L978 780L950 900L925 950L890 950L890 900L860 950L815 950L815 855L860 790L890 710L870 600L840 490L790 390L730 310L640 255L545 228L480 245L400 285L330 350L270 430L200 560L150 640L135 730L170 790L225 850L225 950L150 950L118 905L118 950Z"/>
                <path fill="#ffff00" d="M695 850L725 810L755 810L755 905L725 950L695 950Z"/>
            </svg>
        `;
    }
}
